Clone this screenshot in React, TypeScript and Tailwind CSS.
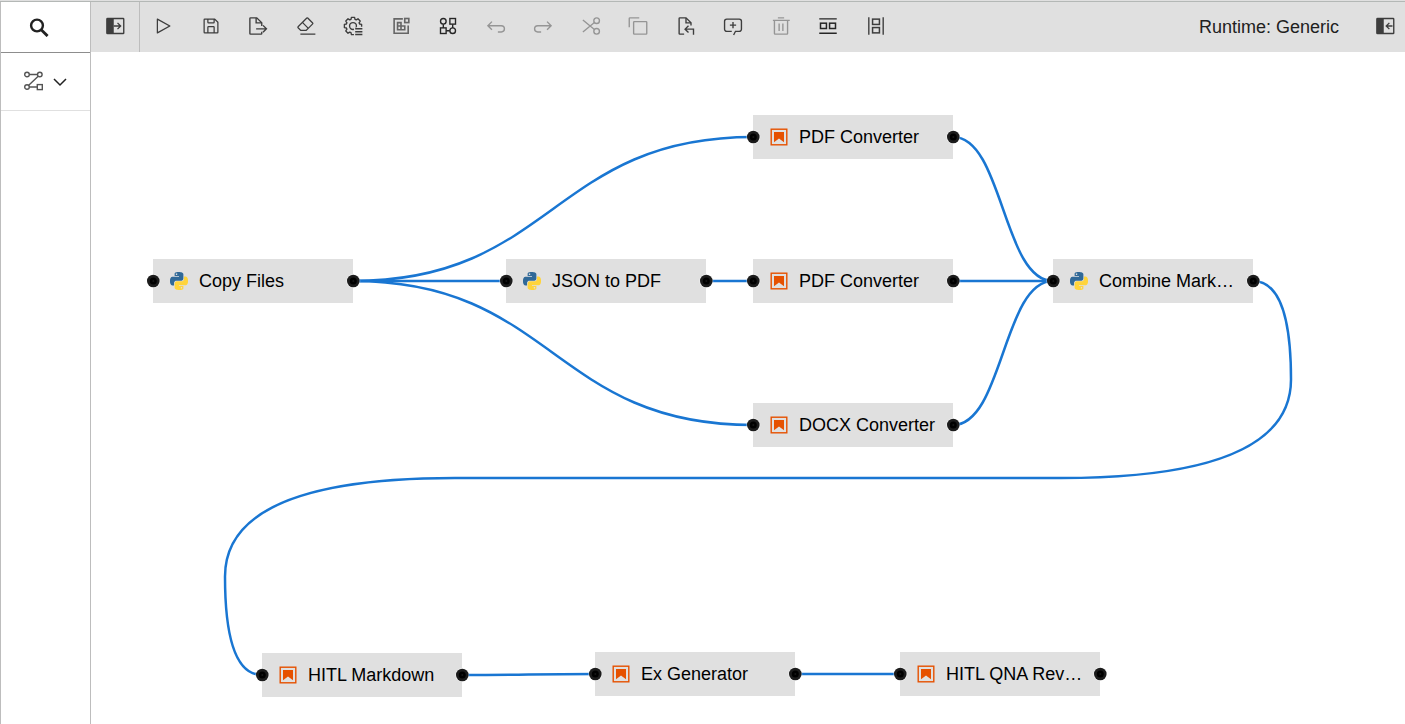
import type { ReactNode } from "react";

/* ---------- icons ---------- */

function Glyph({ children }: { children: ReactNode }) {
  return (
    <svg
      viewBox="0 0 32 32"
      className="size-5 shrink-0"
      fill="none"
      stroke="currentColor"
      strokeWidth="2.2"
      aria-hidden="true"
    >
      {children}
    </svg>
  );
}

function gearPath(cx: number, cy: number, inner: number, outer: number) {
  const points: string[] = [];
  for (let tooth = 0; tooth < 8; tooth++) {
    const base = (tooth * Math.PI) / 4;
    const corners: [number, number][] = [
      [-0.3, inner],
      [-0.18, outer],
      [0.18, outer],
      [0.3, inner],
    ];
    for (const [offset, radius] of corners) {
      const angle = base + offset;
      points.push(
        `${(cx + radius * Math.cos(angle)).toFixed(2)} ${(cy + radius * Math.sin(angle)).toFixed(2)}`,
      );
    }
  }
  return `M${points.join("L")}Z`;
}

const PanelOpenIcon = (
  <Glyph>
    <rect x="3" y="4" width="27" height="24" rx="1" />
    <rect x="3" y="4" width="11" height="24" fill="currentColor" stroke="none" />
    <path d="M14 16H25M20 11L25 16L20 21" />
  </Glyph>
);

const PanelCloseIcon = (
  <Glyph>
    <rect x="3" y="4" width="27" height="24" rx="1" />
    <rect x="3" y="4" width="11" height="24" fill="currentColor" stroke="none" />
    <path d="M28 16H18M23 11L18 16L23 21" />
  </Glyph>
);

const RunIcon = (
  <Glyph>
    <path
      stroke="none"
      fill="currentColor"
      d="M7,28a1,1,0,0,1-1-1V5a1,1,0,0,1,1.4819-.8763l20,11a1,1,0,0,1,0,1.7525l-20,11A1.0005,1.0005,0,0,1,7,28ZM8,6.6909V25.3088L24.9248,16Z"
    />
  </Glyph>
);

const SaveIcon = (
  <Glyph>
    <path
      stroke="none"
      fill="currentColor"
      d="M27.71,9.29l-5-5A1,1,0,0,0,22,4H6A2,2,0,0,0,4,6V26a2,2,0,0,0,2,2H26a2,2,0,0,0,2-2V10A1,1,0,0,0,27.71,9.29ZM12,6h8v4H12Zm8,20H12V18h8Zm2,0V18a2,2,0,0,0-2-2H12a2,2,0,0,0-2,2v8H6V6h4v4a2,2,0,0,0,2,2h8a2,2,0,0,0,2-2V6.41l4,4V26Z"
    />
  </Glyph>
);

const ExportIcon = (
  <Glyph>
    <path d="M22 25V28Q22 29 21 29H4Q3 29 3 28V4Q3 3 4 3H14L22 11V16" />
    <path d="M13 3V11H22" />
    <path d="M13 20.5H29.5M24 15L29.5 20.5L24 26" />
  </Glyph>
);

const EraseIcon = (
  <Glyph>
    <g stroke="none" fill="currentColor">
      <path d="M7 28H31V30H7z" />
      <path d="M27.38,10.51,19.45,2.59a2,2,0,0,0-2.83,0l-14,14a2,2,0,0,0,0,2.83L7.13,24h9.59L27.38,13.34A2,2,0,0,0,27.38,10.51ZM15.89,22H8L4,18l6.31-6.31,7.93,7.92Zm3.76-3.76-7.92-7.93L18,4,26,11.93Z" />
    </g>
  </Glyph>
);

const SettingsIcon = (
  <Glyph>
    <clipPath id="gear-visible">
      <path d="M0 0H32V17H22V18.5H17.5V32H0Z" />
    </clipPath>
    <g clipPath="url(#gear-visible)" strokeLinejoin="round">
      <path d={gearPath(16, 16, 11, 14)} />
      <circle cx="16" cy="16" r="5.5" />
    </g>
    <path d="M19.5 20.5H31M19.5 25H31M19.5 29.5H31" strokeWidth="2.4" />
  </Glyph>
);

const PaletteIcon = (
  <Glyph>
    <g strokeWidth="2.6">
      <path d="M19 4.500H5V27.500H27.500V15" />
      <rect x="22" y="4" width="6.500" height="6.500" />
      <path d="M10.500 10.500H16V22H10.500ZM10.500 16H22V22H16" />
    </g>
  </Glyph>
);

const DependenciesIcon = (
  <Glyph>
    <circle cx="8.5" cy="8.5" r="4.5" />
    <rect x="19" y="4" width="9" height="9" />
    <rect x="4" y="19" width="9" height="9" />
    <circle cx="23.5" cy="23.5" r="4.5" />
    <path d="M8.5 13V19M23.5 13V19M13 23.5H19" />
  </Glyph>
);

const UndoIcon = (
  <Glyph>
    <path d="M3 15.5H24.5A5 5 0 0 1 24.5 25.5H19M9.5 9L3 15.5L9.5 22" />
  </Glyph>
);

const RedoIcon = (
  <Glyph>
    <path d="M29 15.5H7.5A5 5 0 0 0 7.5 25.5H13M22.5 9L29 15.5L22.5 22" />
  </Glyph>
);

const CutIcon = (
  <Glyph>
    <circle cx="25" cy="7.5" r="4.5" />
    <circle cx="25" cy="24.5" r="4.5" />
    <path d="M3 6.5L21.5 21.5M3 25.5L21.5 10.5" />
  </Glyph>
);

const CopyIcon = (
  <Glyph>
    <rect x="9" y="9" width="21" height="20" rx="1" />
    <path d="M2 18V4Q2 3 3 3H18" />
  </Glyph>
);

const PasteIcon = (
  <Glyph>
    <path d="M13 29H6Q5 29 5 28V4Q5 3 6 3H16L24 11V15" />
    <path d="M16 3V11H24" />
    <path d="M28 30V21H15M20 15.5L14.5 21L20 26.5" />
  </Glyph>
);

const CommentIcon = (
  <Glyph>
    <path d="M14 24.5H6A3.5 3.5 0 0 1 2.5 21V8.5A3.5 3.5 0 0 1 6 5H26A3.5 3.5 0 0 1 29.5 8.5V21A3.5 3.5 0 0 1 26 24.5H20L17 30.5" />
    <path d="M16 9.5V19.5M11 14.5H21" />
  </Glyph>
);

const DeleteIcon = (
  <Glyph>
    <path d="M3 7H30M11 3H21M5.5 7V28Q5.5 29 6.5 29H25.5Q26.5 29 26.5 28V7M13 12V24M19 12V24" />
  </Glyph>
);

const ArrangeHorizontalIcon = (
  <Glyph>
    <path d="M2 4.5H30M2 27.5H30" />
    <rect x="4" y="11.5" width="9.5" height="8.5" strokeWidth="2.4" />
    <rect x="18.5" y="11.5" width="9.5" height="8.5" strokeWidth="2.4" />
  </Glyph>
);

const ArrangeVerticalIcon = (
  <Glyph>
    <path d="M4.5 2V30M27.5 2V30" />
    <rect x="10.5" y="5" width="11" height="8.5" strokeWidth="2.4" />
    <rect x="10.5" y="18.5" width="11" height="8.5" strokeWidth="2.4" />
  </Glyph>
);

const PYTHON_SNAKE =
  "M14.25.18l.9.2.73.26.59.3.45.32.34.34.25.34.16.33.1.3.04.26.02.2-.01.13V8.5l-.05.63-.13.55-.21.46-.26.38-.3.31-.33.25-.35.19-.35.14-.33.1-.3.07-.26.04-.21.02H8.77l-.69.05-.59.14-.5.22-.41.27-.33.32-.27.35-.2.36-.15.37-.1.35-.07.32-.04.27-.02.21v3.06H3.17l-.21-.03-.28-.07-.32-.12-.35-.18-.36-.26-.36-.36-.35-.46-.32-.59-.28-.73-.21-.88-.14-1.05-.05-1.23.06-1.22.16-1.04.24-.87.32-.71.36-.57.4-.44.42-.33.42-.24.4-.16.36-.1.32-.05.24-.01h.16l.06.01h8.16v-.83H6.18l-.01-2.75-.02-.37.05-.34.11-.31.17-.28.25-.26.31-.23.38-.2.44-.18.51-.15.58-.12.64-.1.71-.06.77-.04.84-.02 1.27.05zm-6.3 1.98l-.23.33-.08.41.08.41.23.34.33.22.41.09.41-.09.33-.22.23-.34.08-.41-.08-.41-.23-.33-.33-.22-.41-.09-.41.09z";

function PythonIcon() {
  return (
    <svg viewBox="0 0 24 24" className="size-[18px] shrink-0" aria-hidden="true">
      <path d={PYTHON_SNAKE} fill="#306998" />
      <path d={PYTHON_SNAKE} fill="#ffd43b" transform="rotate(180 12 12)" />
    </svg>
  );
}

function NotebookIcon() {
  return (
    <svg viewBox="0 0 18 18" className="size-[18px] shrink-0" aria-hidden="true">
      <rect x="1.2" y="1.2" width="15.6" height="15.6" fill="none" stroke="#e65100" strokeWidth="1.4" />
      <path d="M4 4H14V14.2L9 10.5L4 14.2Z" fill="#e65100" />
    </svg>
  );
}

/* ---------- toolbar ---------- */

type Tool = { label: string; icon: ReactNode; tone?: "muted" | "strong" | "soft" };

const tools: Tool[] = [
  { label: "Run Pipeline", icon: RunIcon },
  { label: "Save Pipeline", icon: SaveIcon },
  { label: "Export Pipeline", icon: ExportIcon },
  { label: "Clear Pipeline", icon: EraseIcon },
  { label: "Open Runtimes", icon: SettingsIcon },
  { label: "Open Runtime Images", icon: PaletteIcon, tone: "soft" },
  { label: "Open Component Catalogs", icon: DependenciesIcon, tone: "strong" },
  { label: "Undo", icon: UndoIcon, tone: "muted" },
  { label: "Redo", icon: RedoIcon, tone: "muted" },
  { label: "Cut", icon: CutIcon, tone: "muted" },
  { label: "Copy", icon: CopyIcon, tone: "muted" },
  { label: "Paste", icon: PasteIcon },
  { label: "Add Comment", icon: CommentIcon },
  { label: "Delete", icon: DeleteIcon, tone: "muted" },
  { label: "Arrange Horizontally", icon: ArrangeHorizontalIcon, tone: "strong" },
  { label: "Arrange Vertically", icon: ArrangeVerticalIcon },
];

const toneClass = {
  normal: "text-[#3d3d3d]",
  muted: "text-[#959595]",
  strong: "text-[#262626]",
  soft: "text-[#666666]",
};

function Toolbar() {
  return (
    <header className="flex h-[50px] shrink-0 items-stretch bg-[#e0e0e0]">
      <button
        type="button"
        aria-label="Open Palette"
        className="flex w-[49px] shrink-0 items-center justify-center border-r border-[#bdbdbd] pb-[2px] text-[#3d3d3d]"
      >
        {PanelOpenIcon}
      </button>
      <div className="grid w-[760px] shrink-0 grid-cols-[repeat(16,minmax(0,1fr))]">
        {tools.map((tool) => (
          <button
            key={tool.label}
            type="button"
            aria-label={tool.label}
            disabled={tool.tone === "muted"}
            className={`flex items-center justify-center pr-px pb-[2px] ${toneClass[tool.tone ?? "normal"]}`}
          >
            {tool.icon}
          </button>
        ))}
      </div>
      <div className="ml-auto flex items-stretch gap-9 pr-[10px]">
        <span className="self-center whitespace-nowrap text-[18px] leading-6 text-[#212121]">Runtime: Generic</span>
        <button type="button" aria-label="Open Panel" className="flex items-center pb-[2px] text-[#3d3d3d]">
          {PanelCloseIcon}
        </button>
      </div>
    </header>
  );
}

/* ---------- palette ---------- */

function Palette() {
  return (
    <aside className="flex w-[91px] shrink-0 flex-col border-x border-[#bdbdbd] bg-white">
      <button
        type="button"
        aria-label="Search nodes"
        className="flex h-[51px] items-center border-b border-[#8d8d8d] pl-7 text-[#212121]"
      >
        <svg viewBox="0 0 20 20" className="size-5" fill="none" stroke="currentColor" aria-hidden="true">
          <circle cx="8" cy="8.5" r="5.9" strokeWidth="2.4" />
          <path d="M12.2 12.7L18.6 19.1" strokeWidth="2.8" />
        </svg>
      </button>
      <button
        type="button"
        aria-label="Pipeline components"
        aria-expanded="false"
        className="flex h-[58px] items-center gap-[9px] border-b border-[#e0e0e0] pb-[2px] pl-[23px] text-[#555555]"
      >
        <svg viewBox="0 0 20 20" className="size-5" fill="none" stroke="currentColor" strokeWidth="1.4" aria-hidden="true">
          <circle cx="3" cy="3.5" r="2.3" />
          <circle cx="15.8" cy="3.5" r="2.3" />
          <circle cx="3" cy="16" r="2.3" />
          <rect x="13.3" y="13.6" width="5" height="5" />
          <path d="M5.3 3.5H13.5M14.2 5.2L4.7 14.3M5.3 16H13.3" />
        </svg>
        <svg viewBox="0 0 14 14" className="size-[14px] text-[#212121]" fill="none" stroke="currentColor" strokeWidth="1.5" aria-hidden="true">
          <path d="M1 5L7 11L13 5" />
        </svg>
      </button>
    </aside>
  );
}

/* ---------- canvas ---------- */

const NODE_WIDTH = 200;
const NODE_HALF_HEIGHT = 22;

type PipelineNode = { id: string; label: string; kind: "python" | "notebook"; x: number; y: number };

const nodes: PipelineNode[] = [
  { id: "copy", label: "Copy Files", kind: "python", x: 62, y: 207 },
  { id: "json", label: "JSON to PDF", kind: "python", x: 415, y: 207 },
  { id: "pdf-a", label: "PDF Converter", kind: "notebook", x: 662, y: 63 },
  { id: "pdf-b", label: "PDF Converter", kind: "notebook", x: 662, y: 207 },
  { id: "docx", label: "DOCX Converter", kind: "notebook", x: 662, y: 351 },
  { id: "combine", label: "Combine Mark…", kind: "python", x: 962, y: 207 },
  { id: "hitl-md", label: "HITL Markdown", kind: "notebook", x: 171, y: 601 },
  { id: "generator", label: "Ex Generator", kind: "notebook", x: 504, y: 600 },
  { id: "hitl-qna", label: "HITL QNA Rev…", kind: "notebook", x: 809, y: 600 },
];

const links: [string, string][] = [
  ["copy", "pdf-a"],
  ["copy", "json"],
  ["copy", "docx"],
  ["json", "pdf-b"],
  ["pdf-a", "combine"],
  ["pdf-b", "combine"],
  ["docx", "combine"],
  ["combine", "hitl-md"],
  ["hitl-md", "generator"],
  ["generator", "hitl-qna"],
];

function linkPath(fromId: string, toId: string) {
  const from = nodes.find((n) => n.id === fromId)!;
  const to = nodes.find((n) => n.id === toId)!;
  const x1 = from.x + NODE_WIDTH;
  const y1 = from.y + NODE_HALF_HEIGHT;
  const x2 = to.x;
  const y2 = to.y + NODE_HALF_HEIGHT;
  if (x2 > x1) {
    const mid = (x1 + x2) / 2;
    return `M${x1} ${y1}C${mid} ${y1} ${mid} ${y2} ${x2} ${y2}`;
  }
  // A link that runs backwards leaves to the right, crosses half way down and enters from the left.
  const right = x1 + 38;
  const left = x2 - 37;
  const cross = (y1 + y2) / 2;
  return [
    `M${x1} ${y1}`,
    `Q${right} ${y1} ${right} ${(y1 + cross) / 2}`,
    `Q${right} ${cross} ${right - 230} ${cross}`,
    `H${left + 230}`,
    `Q${left} ${cross} ${left} ${(y2 + cross) / 2}`,
    `Q${left} ${y2} ${x2} ${y2}`,
  ].join("");
}

function Port({ cx, cy }: { cx: number; cy: number }) {
  return (
    <g>
      <circle cx={cx} cy={cy} r="7" fill="#ffffff" fillOpacity="0.5" />
      <circle cx={cx} cy={cy} r="6.3" fill="#1c1c1c" />
      <circle cx={cx} cy={cy} r="3.5" fill="#000000" />
      <circle cx={cx} cy={cy} r="1" fill="#161616" />
    </g>
  );
}

function Canvas() {
  return (
    <main className="relative min-h-0 flex-1 overflow-hidden bg-white">
      <svg className="absolute inset-0 size-full" fill="none" stroke="#1976d2" strokeWidth="2.5" aria-hidden="true">
        {links.map(([from, to]) => (
          <path key={`${from}-${to}`} d={linkPath(from, to)} />
        ))}
      </svg>
      {nodes.map((node) => (
        <div
          key={node.id}
          className="absolute flex h-11 w-[200px] items-center gap-[11px] bg-[#e0e0e0] pl-[17px] text-[18px] leading-6 text-black"
          style={{ left: node.x, top: node.y }}
        >
          {node.kind === "python" ? <PythonIcon /> : <NotebookIcon />}
          <span className="whitespace-nowrap">{node.label}</span>
        </div>
      ))}
      <svg className="pointer-events-none absolute inset-0 size-full" aria-hidden="true">
        {nodes.map((node) => (
          <g key={node.id}>
            <Port cx={node.x + 0.3} cy={node.y + NODE_HALF_HEIGHT} />
            <Port cx={node.x + NODE_WIDTH + 0.3} cy={node.y + NODE_HALF_HEIGHT} />
          </g>
        ))}
      </svg>
    </main>
  );
}

export default function App() {
  return (
    <div className="flex h-screen flex-col overflow-hidden bg-white font-['Liberation_Sans',Arial,sans-serif]">
      <div className="h-[2px] shrink-0 border-b border-[#b4b8b6] bg-[#e0e0e0]" />
      <div className="flex min-h-0 flex-1">
        <Palette />
        <div className="flex min-w-0 flex-1 flex-col">
          <Toolbar />
          <Canvas />
        </div>
      </div>
    </div>
  );
}
